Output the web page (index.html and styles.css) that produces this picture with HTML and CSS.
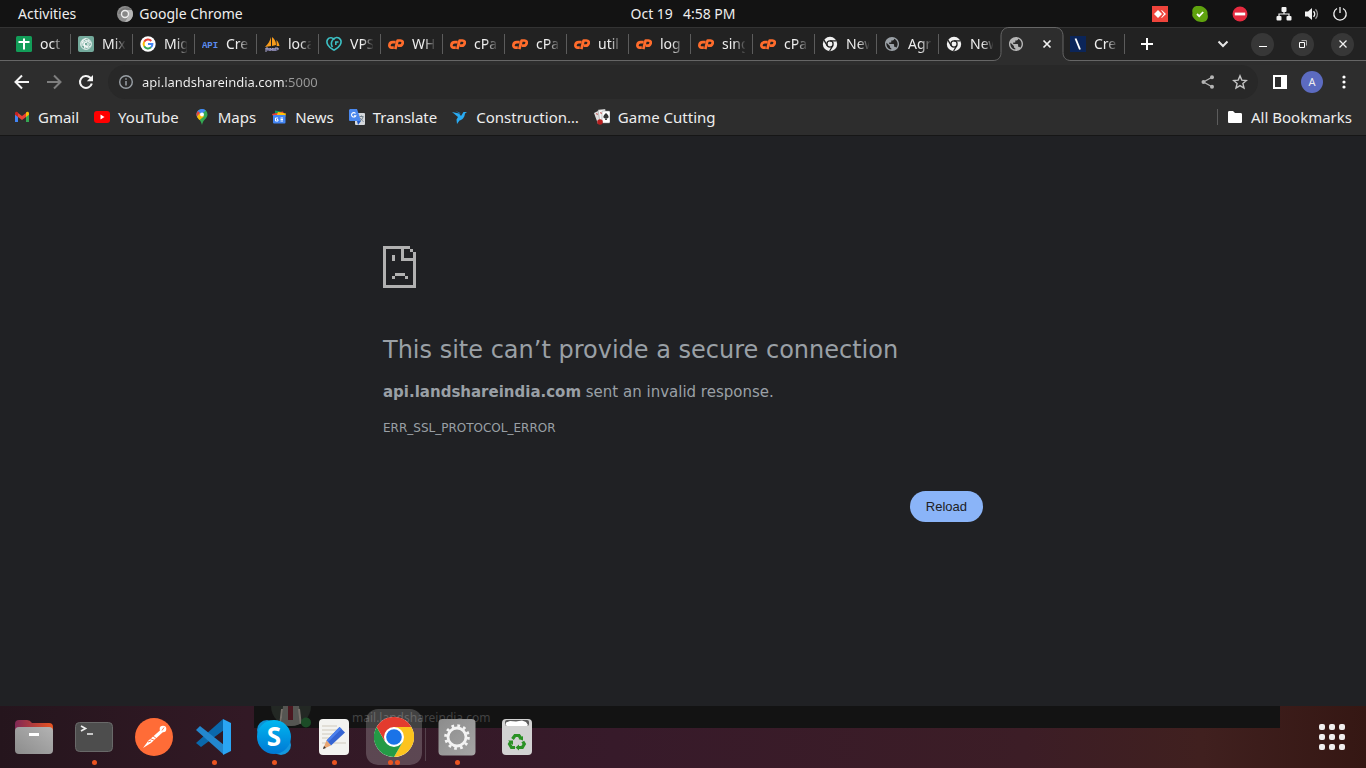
FILE: index.html
```html
<!DOCTYPE html>
<html lang="en">
<head>
<meta charset="utf-8">
<title>api.landshareindia.com</title>
<link rel="stylesheet" href="styles.css">
</head>
<body>
<svg class="defs" aria-hidden="true">
  <symbol id="cp" viewBox="0 0 16 16"><g fill="none" stroke="#ff6c2c" stroke-width="2.7" stroke-linejoin="round"><path d="M7.700 6.200H4.800C2.900 6.200 1.600 7.500 1.400 9.200S2.400 11.600 3.600 11.600H5.800"/><path d="M7.300 13.200 9.600 4.500h2.900c2 0 2.600 1.500 2.100 3S13 9.700 12 9.700H9.800"/></g></symbol>
  <symbol id="newtab" viewBox="0 0 16 16"><circle cx="8" cy="8" r="7.2" fill="#f1f1f1"/><circle cx="8" cy="8" r="3.1" fill="#f1f1f1" stroke="#222" stroke-width="1.3"/><path d="M8 4.800h6.400M5.200 9.600 2 4.200M10.800 9.600 7.600 15" stroke="#222" stroke-width="1.300"/></symbol>
  <symbol id="globe" viewBox="0.6 0.6 22.8 22.8"><path fill="currentColor" d="M12 2C6.480 2 2 6.480 2 12s4.480 10 10 10 10-4.480 10-10S17.520 2 12 2zm-1 17.930c-3.950-.49-7-3.850-7-7.930 0-.62.08-1.210.21-1.790L9 15v1c0 1.100.9 2 2 2v1.930zm6.900-2.540c-.26-.81-1-1.390-1.900-1.390h-1v-3c0-.55-.45-1-1-1H8v-2h2c.55 0 1-.45 1-1V7h2c1.100 0 2-.9 2-2v-.41c2.930 1.190 5 4.060 5 7.410 0 2.080-.8 3.970-2.100 5.390z"/></symbol>
  <symbol id="chrome" viewBox="0 0 48 48"><circle cx="24" cy="24" r="24" fill="#fff"/><path d="M24 12h20.800A24 24 0 0 1 24 48l10.400-18Z" fill="#fcc31e"/><path d="M3.200 12A24 24 0 0 0 24 48l10.400-18L24 34 13.600 30Z" fill="#249a46"/><path d="M24 12h20.800A24 24 0 0 0 3.200 12l10.400 18L15 20Z" fill="#e33b2e"/><circle cx="24" cy="24" r="12" fill="#fff"/><circle cx="24" cy="24" r="9.400" fill="#1a73e8"/></symbol>
</svg>

<header class="topbar">
  <div class="topbar-left">
    <button class="plain">Activities</button>
    <button class="plain app"><svg class="i16" viewBox="0 0 16 16"><circle cx="8" cy="8" r="8" fill="#8d8d8d"/><path d="M8 8H1.200A7.900 7.900 0 0 1 14.900 4H8Z" fill="#777"/><path d="M8 4h6.900A8 8 0 0 1 8 16l3.500-6z" fill="#b5b5b5"/><circle cx="8" cy="8" r="3.500" fill="#888" stroke="#eee" stroke-width="1.400"/></svg>Google Chrome</button>
  </div>
  <button class="plain clock"><span>Oct 19</span><span>4:58 PM</span></button>
  <div class="tray">
    <div class="tray-apps">
      <svg class="i16" viewBox="0 0 16 16"><path fill="#ef443b" d="M0 0h16v16H0z"/><path fill="#fff" d="m6 4 4 4-4 4-4-4zM9 4.200h1L14 8l-4 3.800H9L12 8z"/></svg>
      <svg class="i16" viewBox="0 0 16 16"><path fill="#5fa20e" d="M5 0C9 0 10 0 12 1.500S16 5 15.500 8C17 13 14 16 11 16c-5 0-7-1-9-3.500S0 9 .5 7C-.5 3 2 0 5 0z"/><path d="m5 8 2.200 2.200L11.200 6" fill="none" stroke="#fff" stroke-width="1.800"/></svg>
      <svg class="i16" viewBox="0 0 16 16"><circle cx="8" cy="8" r="7.500" fill="#e52a3f"/><path d="M2.800 6.600h10.400v2.800H2.800z" fill="#fff"/></svg>
    </div>
    <div class="tray-system">
      <svg class="i16" viewBox="0 0 16 16" fill="#f2f2f2"><rect x="5.500" y="1" width="5" height="5" rx="1"/><rect x=".5" y="10" width="5" height="4.500" rx="1"/><rect x="10.500" y="10" width="5" height="4.500" rx="1"/><path d="M3 11V8h10v3M8 5v3" fill="none" stroke="#f2f2f2" stroke-width="1.200"/></svg>
      <svg class="i16" viewBox="0 0 16 16"><path d="M1 5.500h3L8 2v12l-4-3.500H1z" fill="#f2f2f2"/><path d="M9.500 5.200a4 4 0 0 1 0 5.600" stroke="#f2f2f2" stroke-width="1.500" fill="none"/><path d="M11.500 3.200a7 7 0 0 1 0 9.600" stroke="#999" stroke-width="1.300" fill="none"/></svg>
      <svg class="i16" viewBox="0 0 16 16" fill="none" stroke="#f2f2f2" stroke-width="1.300"><path d="M8 1v6M5 2.500a6.200 6.200 0 1 0 6 0"/></svg>
    </div>
  </div>
</header>

<nav class="tabstrip" aria-label="Tabs">
  <button class="tab"><svg class="i16" viewBox="0 0 16 16"><rect width="16" height="16" rx="1.500" fill="#129d58"/><path d="M8 2.500v11M2.500 6h11" stroke="#fff" stroke-width="2"/></svg><span class="label">oct</span></button>
  <button class="tab"><svg class="i16" viewBox="0 0 16 16"><rect width="16" height="16" rx="2" fill="#74aa9c"/><g fill="none" stroke="#fff" stroke-width=".8"><circle cx="8" cy="8" r="5.400"/><path d="M5 3.500v5l5 3M8 2.600 4 5v5M11 4 6.500 6.600v5.500M13 7 8 4.300 3.500 7M13 9.500 9.500 11.800 5 9M11 4v5.500L6.500 12.500M8 6.200l1.800 1v2L8 10l-1.800-1V7.200z"/></g></svg><span class="label">Mix</span></button>
  <button class="tab"><svg class="i16" viewBox="0 0 16 16"><circle cx="8" cy="8" r="7.700" fill="#fff"/><g fill="none" stroke-width="2"><path d="M11.300 5A4.400 4.400 0 0 0 4.200 5.800" stroke="#ea4335"/><path d="M4.200 5.800a4.400 4.400 0 0 0 0 4.400" stroke="#fbbc05"/><path d="M4.200 10.200a4.400 4.400 0 0 0 6.800 1.100" stroke="#34a853"/><path d="M11 11.300A4.400 4.400 0 0 0 12.400 8H8" stroke="#4285f4"/></g></svg><span class="label">Mig</span></button>
  <button class="tab"><svg class="i16" viewBox="0 0 16 16"><text x="8" y="12" class="api">API</text></svg><span class="label">Cre</span></button>
  <button class="tab"><svg class="i16" viewBox="0 0 16 16"><path d="M7 1v9l-6 1C4 8 6 5 7 1zM8 1c3 2 4 5 4 8l-4 1zM12.500 4c2 2 2.500 4 3 6h-2.800z" fill="#f89c1c"/><path d="M1 12h14l-2 3H3z" fill="#5c5a7c"/><path d="M2 16v-4h2v2M6 15v-3l1.500 2L9 12v3M11 15v-3h3v2" stroke="#a9a6cc" fill="none"/></svg><span class="label">loca</span></button>
  <button class="tab"><svg class="i16" viewBox="0 0 16 16" fill="none" stroke="#3cc0c4" stroke-width="1.600"><path d="M8 14.200C2 11.500-.3 6.500 1.600 3.500s5.400-1.700 7 0"/><path d="M8 14.200c6-2.700 8.300-7.700 6.400-10.700S8.500.9 6.500 4.200 5 9 6.500 11"/><path d="M12.500 6H9.800v3"/></svg><span class="label">VPS</span></button>
  <button class="tab"><svg class="i16"><use href="#cp"/></svg><span class="label">WH</span></button>
  <button class="tab"><svg class="i16"><use href="#cp"/></svg><span class="label">cPa</span></button>
  <button class="tab"><svg class="i16"><use href="#cp"/></svg><span class="label">cPa</span></button>
  <button class="tab"><svg class="i16"><use href="#cp"/></svg><span class="label">util</span></button>
  <button class="tab"><svg class="i16"><use href="#cp"/></svg><span class="label">log</span></button>
  <button class="tab"><svg class="i16"><use href="#cp"/></svg><span class="label">sing</span></button>
  <button class="tab"><svg class="i16"><use href="#cp"/></svg><span class="label">cPa</span></button>
  <button class="tab"><svg class="i16"><use href="#newtab"/></svg><span class="label">New</span></button>
  <button class="tab"><svg class="i16 cool"><use href="#globe"/></svg><span class="label">Agr</span></button>
  <button class="tab last"><svg class="i16"><use href="#newtab"/></svg><span class="label">New</span></button>
  <div class="tab active">
    <svg class="tab-shape" viewBox="0 0 78 34"><path d="M0 34v-.5c5 0 8-3 8-8V9c0-5 3-8.500 8-8.500h46c5 0 8 3.500 8 8.500v16.500c0 5 3 8 8 8v.5z" fill="#2d2d2d"/><path d="M0 33.500c5 0 8-3 8-8V9c0-5 3-8.500 8-8.500h46c5 0 8 3.500 8 8.500v16.500c0 5 3 8 8 8" fill="none" stroke="#666"/></svg>
    <svg class="i16 warm"><use href="#globe"/></svg>
    <button class="icon-btn close" aria-label="Close tab"><svg class="i16" viewBox="0 0 16 16"><path d="m4.500 4.500 7 7m0-7-7 7" stroke="#f1f1f1" stroke-width="1.700"/></svg></button>
  </div>
  <button class="tab"><svg class="i16" viewBox="0 0 16 16"><path d="M0 0h16v16H0z" fill="#0b2559"/><path d="m5.500 2.500 4.500 11" stroke="#fff" stroke-width="1.900"/></svg><span class="label">Cre</span></button>
  <button class="icon-btn plus" aria-label="New tab"><svg class="i16" viewBox="0 0 16 16"><path d="M8 2v12M2 8h12" stroke="#fff" stroke-width="2"/></svg></button>
  <div class="window-controls">
    <button class="icon-btn" aria-label="Search tabs"><svg class="i16" viewBox="0 0 16 16"><path d="m3.500 5.500 4.500 4.500 4.500-4.500" fill="none" stroke="#e6e6e6" stroke-width="2"/></svg></button>
    <button class="round" aria-label="Minimize"><svg class="i16" viewBox="0 0 16 16"><path d="M4 10.500h8" stroke="#fff"/></svg></button>
    <button class="round" aria-label="Restore"><svg class="i16" viewBox="0 0 16 16" fill="none"><path d="M6.500 4.500h5v5" stroke="#aaa"/><path d="M4.500 6.500h5v5h-5z" stroke="#fff"/></svg></button>
    <button class="round" aria-label="Close"><svg class="i16" viewBox="0 0 16 16"><path d="m4.500 4.500 7 7m0-7-7 7" stroke="#f1f1f1" stroke-width="1.300"/></svg></button>
  </div>
</nav>

<div class="toolbar">
  <button class="tool" aria-label="Back"><svg class="i16" viewBox="0 0 16 16" fill="none" stroke="#f4f4f4" stroke-width="2"><path d="M15 8H2M8 1.500 1.500 8 8 14.500"/></svg></button>
  <button class="tool" aria-label="Forward"><svg class="i16" viewBox="0 0 16 16" fill="none" stroke="#7e7e7e" stroke-width="2"><path d="M1 8h13M8 1.500 14.500 8 8 14.500"/></svg></button>
  <button class="tool" aria-label="Reload page"><svg class="i16" viewBox="0 0 16 16"><path d="M13.800 9.500A6 6 0 1 1 12.300 3.800l1 1" fill="none" stroke="#f4f4f4" stroke-width="2.100"/><path d="M15 1v6.200H8.800z" fill="#f4f4f4"/></svg></button>
  <form class="omnibox">
    <svg class="i16" viewBox="0 0 16 16"><circle cx="8" cy="8" r="6.300" fill="none" stroke="#9aa0a6" stroke-width="1.400"/><path d="M8 7v4.500M8 4.300v1.500" stroke="#9aa0a6" stroke-width="1.500"/></svg>
    <input class="url" type="text" aria-label="Address" value="api.landshareindia.com:5000">
    <button type="button" class="tool" aria-label="Share"><svg class="i16" viewBox="0 0 16 16" fill="#b5b5b5"><circle cx="3.500" cy="8" r="2"/><circle cx="12" cy="3.300" r="2"/><circle cx="12" cy="12.700" r="2"/><path d="M12 3.300 3.500 8l8.500 4.700" fill="none" stroke="#b5b5b5" stroke-width="1.300"/></svg></button>
    <button type="button" class="tool" aria-label="Bookmark"><svg class="i16" viewBox="0 0 16 16"><path d="m8 1.900 1.800 4.200 4.600.4-3.500 3 1.100 4.500L8 11.600 4 14l1.100-4.500-3.500-3 4.600-.4z" fill="none" stroke="#c4c4c4" stroke-width="1.400"/></svg></button>
  </form>
  <button class="tool" aria-label="Side panel"><svg class="i16" viewBox="0 0 16 16"><path d="M1 1h14v14H1zM3 3v10h6V3z" fill="#fff" fill-rule="evenodd"/></svg></button>
  <button class="tool" aria-label="Profile"><span class="avatar">A</span></button>
  <button class="tool" aria-label="Menu"><svg class="i16" viewBox="0 0 16 16" fill="#fff"><circle cx="8" cy="3" r="1.600"/><circle cx="8" cy="8" r="1.600"/><circle cx="8" cy="13" r="1.600"/></svg></button>
</div>

<nav class="bookmarks" aria-label="Bookmarks">
  <a href="#gmail"><svg class="i16" viewBox="0 0 16 16"><path d="M1 4v9h3V6z" fill="#4285f4"/><path d="M15 4v9h-3V6z" fill="#34a853"/><path d="m4 4 4 3 4-3v4l-4 3-4-3z" fill="#ea4335"/><path d="M1 4.500C1 2.500 3 2.300 4 3.500V8L1 5.800z" fill="#c5221f"/><path d="M15 4.500c0-2-2-2.200-3-1V8l3-2.200z" fill="#fbbc04"/></svg>Gmail</a>
  <a href="#youtube"><svg class="i16" viewBox="0 0 16 16"><rect y="2" width="16" height="12" rx="3" fill="#f00"/><path d="m6.500 5.500 4 2.500-4 2.500z" fill="#fff"/></svg>YouTube</a>
  <a href="#maps"><svg class="i16" viewBox="0 0 16 16"><path d="M8 0a5.500 5.500 0 0 0-5.500 5.500c0 4 4.500 5 5.500 10.500 1-5.500 5.500-6.500 5.500-10.500A5.500 5.500 0 0 0 8 0z" fill="#34a853"/><path d="M3.500 8.500 11.800 1.500A5.500 5.500 0 0 0 2.500 5.500c0 1.200.4 2.100 1 3z" fill="#4285f4"/><path d="M3.800 2 6 4 2.900 7.500A5.500 5.500 0 0 1 3.800 2z" fill="#ea4335"/><path d="m3 7.500 3-3.500 4 3.500L5.500 11c-1-1-2.200-2.200-2.500-3.500z" fill="#fbbc04"/><circle cx="8" cy="5.500" r="2" fill="#fff"/></svg>Maps</a>
  <a href="#news"><svg class="i16" viewBox="0 0 16 16"><path d="M4 1.500 12 3v4H4z" fill="#0f9d58"/><path d="m1 5 11-2.500L14 7H2z" fill="#ea4335"/><path d="m7 3 8 1.500-1 4H5z" fill="#ffc107"/><rect x="2" y="6" width="12.500" height="8.500" rx="1" fill="#4285f4"/><path d="M7 9H4.500v3H7v-1.500H6M9.500 9H12M9.500 10.500H12M9.500 12H12" stroke="#fff" fill="none"/></svg>News</a>
  <a href="#translate"><svg class="i16" viewBox="0 0 16 16"><rect x="6" y="4" width="10" height="12" rx="1" fill="#d5d8dc"/><path d="M1 0h7l4 12H1a1 1 0 0 1-1-1V1z" fill="#4a88ee"/><path d="M8 12h4l-3 4z" fill="#2158c4"/><path d="M6.500 4.500a2.200 2.200 0 1 0 .3 2.200H5" fill="none" stroke="#fff" stroke-width="1.100"/><path d="M10.500 7.500h4M12.500 6.500v1M14 8c-.5 2-1.500 3-3 4M11.500 9c.5 1.500 1.500 2.500 3 3.500" stroke="#71808b" fill="none"/></svg>Translate</a>
  <a href="#construction"><svg class="i16" viewBox="0 0 16 16" fill="#29abf2"><path d="m0 3 7 1.500L9 7l2.500-4H15l-2 1.500C12.500 9 10 11 7.500 11.500L5 15l-.5-4.500L6 8z"/><path d="m3.500 2 4 1.500 1.500 2z" fill="#187fc6"/></svg>Construction…</a>
  <a href="#cards"><svg class="i16" viewBox="0 0 16 16"><path d="m0 4 6-3 4 11-6 3z" fill="#ddd"/><path d="m4 1 7-1 2 12-7 1z" fill="#f3f3f3" stroke="#888" stroke-width=".5"/><rect x="8" y="2" width="8" height="12" rx="1" fill="#fff" stroke="#888" stroke-width=".5"/><path d="M12 4c2 2 3 3 2.500 4.500-.5 1-1.500 1-2 .5l.5 2h-2l.5-2c-.5.500-1.500.5-2-.5C9 7 10 6 12 4z" fill="#333"/><circle cx="6" cy="13" r="2.800" fill="#b62020"/><path d="m2 5 1-1 1 2zM6 4l1-1 1 2z" fill="#b62020"/></svg>Game Cutting</a>
  <a href="#all" class="all"><svg class="i16" viewBox="0 0 16 16"><path d="M1 3.500C1 2.500 1.500 2 2.500 2H6l2 2h5.500c1 0 1.500.5 1.500 1.500v7c0 1-.5 1.500-1.500 1.500h-11c-1 0-1.500-.5-1.500-1.500z" fill="#fff"/></svg>All Bookmarks</a>
</nav>

<main class="page">
  <section class="error">
    <svg class="sad" viewBox="0 0 33 42" fill="#b1b1b1" shape-rendering="crispEdges"><path d="M0 0h27v3H0zM0 0h3v42H0zM0 39h33v3H0zM30 6h3v36h-3zM27 3h3v3h-3zM18 3h3v12h-3zM18 12h15v3H18zM9 9h3v6H9zM12 27h10v3H12zM9 30h3v3H9zM22 30h3v3h-3z"/></svg>
    <h1>This site can’t provide a secure connection</h1>
    <p class="summary"><strong>api.landshareindia.com</strong> sent an invalid response.</p>
    <p class="code">ERR_SSL_PROTOCOL_ERROR</p>
    <button class="reload">Reload</button>
  </section>
</main>

<footer class="dock">
  <div class="behind">
    <svg class="person" viewBox="0 0 40 22"><defs><clipPath id="round"><circle cx="20" cy="0" r="20"/></clipPath></defs><g clip-path="url(#round)"><path fill="#232824" d="M0 0h40v22H0z"/><path d="M12 0h16l3 22H10z" fill="#555552"/><path d="M17 0h5v14h-5z" fill="#4a1820"/><path d="m11 3-2 17M28 3l2 17" stroke="#76706a" stroke-width="2"/></g><circle cx="35" cy="16.500" r="5" fill="#1c4c27"/></svg>
    <span>mail.landshareindia.com</span>
  </div>
  <button class="launcher" aria-label="Files"><svg viewBox="0 0 38 38"><defs><linearGradient id="fo"><stop stop-color="#802856"/><stop offset="1" stop-color="#e95420"/></linearGradient><linearGradient id="fg" x1="0" y1="1" x2="1" y2="0"><stop stop-color="#8c8c8c"/><stop offset="1" stop-color="#b3b3b3"/></linearGradient></defs><path d="M0 6q0-4 4-4h8q3 0 5 3h17q4 0 4 4v13H0z" fill="url(#fo)"/><rect y="9" width="38" height="27" rx="4" fill="url(#fg)"/><path d="M14 16.500h10" stroke="#fff" stroke-width="3"/></svg></button>
  <button class="launcher run" aria-label="Terminal"><svg viewBox="0 0 38 38"><rect x=".5" y="4.500" width="37" height="29" rx="4" fill="#4d4d4d" stroke="#696969"/><path d="m6 8 4.500 2.500L6 13M12 16h6" fill="none" stroke="#eee" stroke-width="1.700"/></svg></button>
  <button class="launcher" aria-label="Postman"><svg viewBox="0 0 38 38"><circle cx="19" cy="19" r="19" fill="#ff6c37"/><path d="m25.500 12-12 10.500L8 30l8-5 12-11z" fill="#fff"/><circle cx="28" cy="11" r="3.300" fill="#fff"/><path d="m15 20.500 5 2M18 18l4 3M27 12.500l2-3M13 24l3-1" stroke="#ff6c37" stroke-width=".9"/></svg></button>
  <button class="launcher run" aria-label="Visual Studio Code"><svg viewBox="0 0 38 38"><path d="M28 1 1 25l5 4L29 12z" fill="#0a68ac"/><path d="m1 12 4-4 24 19-1 9z" fill="#2387ce"/><path d="m28 1 8 4v28l-8 4z" fill="#2aa5f4"/></svg></button>
  <button class="launcher run" aria-label="Skype"><svg viewBox="0 0 38 38"><defs><linearGradient id="sk" x2="0" y2="1"><stop stop-color="#00b7f0"/><stop offset="1" stop-color="#0078d4"/></linearGradient></defs><circle cx="12" cy="12" r="10" fill="#0e91d4"/><circle cx="26" cy="27" r="10" fill="#1497dd"/><circle cx="19" cy="19" r="17" fill="url(#sk)"/><text x="19" y="28" class="skype">S</text></svg></button>
  <button class="launcher run" aria-label="Text Editor"><svg viewBox="0 0 38 38"><rect x="4" y="1" width="30" height="36" rx="4" fill="#f3f3f0"/><path d="M7 8h15M7 12h15M7 16h14M7 20h11M7 25h24" stroke="#cfcabb" stroke-width="1.200"/><path d="m24.500 9 5.500 5.500-14 13-4.500-5z" fill="#3564d2"/><path d="m24.500 9 2 1.800-13 13-2-1.300z" fill="#4b7fec"/><path d="m11.500 22.500 4.500 5L8 31z" fill="#e8a672"/><path d="m9 28 2 2-3 1z" fill="#333"/></svg></button>
  <button class="launcher run two current" aria-label="Google Chrome"><svg class="big"><use href="#chrome"/></svg></button>
  <span class="separator"></span>
  <button class="launcher run" aria-label="Settings"><svg viewBox="0 0 38 38"><defs><linearGradient id="st" x2="1" y2="1"><stop stop-color="#8c8c8c"/><stop offset="1" stop-color="#a5a5a5"/></linearGradient></defs><rect x=".5" y="1" width="37" height="36.500" rx="4" fill="url(#st)"/><circle cx="19" cy="19" r="9" fill="none" stroke="#f3f3f3" stroke-width="2.800"/><circle cx="19" cy="19" r="11.300" fill="none" stroke="#f3f3f3" stroke-width="3" stroke-dasharray="2.700 3.217"/></svg></button>
  <button class="launcher" aria-label="Trash"><svg viewBox="0 0 38 38"><rect x="4" y="1" width="30" height="36" rx="4" fill="#d2d2d2"/><rect x="7" y="2" width="24" height="6" rx="2" fill="#5c5c5c"/><path d="M8 4.500 12 3l6 .5 6-1 4 1.500 2 3-1 1H9L7.500 7z" fill="#fff"/><g fill="none" stroke="#2a9124" stroke-width="3.200"><path d="m14.500 21 2.500-3.500h4l2 3"/><path d="m24.800 23.500 1.500 2.500-2 3.500H20"/><path d="M17 29.500h-3.500l-2-3.500 1.500-2.500"/></g><path d="m20.500 21 4.500-3V22.500zM21 26.500v6L17.500 29.500zM10 22.500h5V27z" fill="#2a9124"/></svg></button>
  <button class="launcher apps" aria-label="Show applications"><svg viewBox="0 0 38 38" fill="#f0eeee"><rect x="6" y="6" width="6" height="6" rx="2"/><rect x="16" y="6" width="6" height="6" rx="2"/><rect x="26" y="6" width="6" height="6" rx="2"/><rect x="6" y="16" width="6" height="6" rx="2"/><rect x="16" y="16" width="6" height="6" rx="2"/><rect x="26" y="16" width="6" height="6" rx="2"/><rect x="6" y="26" width="6" height="6" rx="2"/><rect x="16" y="26" width="6" height="6" rx="2"/><rect x="26" y="26" width="6" height="6" rx="2"/></svg></button>
</footer>
</body>
</html>
```
FILE: styles.css
```css
* { box-sizing: border-box; }
html, body { height: 100%; }
body {
  margin: 0;
  display: flex;
  flex-direction: column;
  min-height: 100vh;
  overflow: hidden;
  background: #202124;
  color: #eee;
  font: 14px/20px "Noto Sans", "Open Sans", sans-serif;
}
button {
  margin: 0;
  padding: 0;
  border: 0;
  background: none;
  color: inherit;
  font: inherit;
}
svg { display: block; flex: none; }
.defs { position: absolute; width: 0; height: 0; }
.i16 { width: 16px; height: 16px; }

/* Desktop top bar */
.topbar {
  display: grid;
  grid-template-columns: 1fr auto 1fr;
  align-items: center;
  height: 27px;
  flex: none;
  padding: 0 18px;
  background: #131313;
}
.topbar-left { display: flex; gap: 41px; }
.plain { display: flex; align-items: center; }
.app { gap: 6px; }
.clock { gap: 10px; }
.tray, .tray-apps, .tray-system { display: flex; align-items: center; }
.tray { justify-content: flex-end; gap: 28px; }
.tray-apps { gap: 24px; }
.tray-system { gap: 12px; }

/* Tab strip */
.tabstrip {
  display: flex;
  align-items: center;
  flex: none;
  height: 34px;
  padding: 0 12px 0 9px;
  background: #222;
  border-top: 1px solid #333;
  border-bottom: 1px solid #666;
}
.tab {
  display: flex;
  align-items: center;
  gap: 8px;
  flex: 0 1 62px;
  min-width: 0;
  height: 20px;
  padding-left: 7px;
  border-right: 1px solid #5c5c5c;
}
.last { border-color: transparent; }
.label {
  width: 23px;
  overflow: hidden;
  white-space: nowrap;
  text-align: left;
  -webkit-mask-image: linear-gradient(90deg, #000 12px, transparent 24px);
  mask-image: linear-gradient(90deg, #000 12px, transparent 24px);
}
.cool { color: #9aa0a6; }
.warm { color: #b5b5b5; position: relative; }
.active { position: relative; border: 0; gap: 15px; }
.tab-shape { position: absolute; left: -8px; bottom: -7px; width: 78px; height: 34px; }
.icon-btn { display: flex; flex: none; }
.close { position: relative; }
.plus { margin-left: 14px; }
.api { font: bold 9px "Liberation Mono", monospace; fill: #5b8def; text-anchor: middle; }
.window-controls { display: flex; align-items: center; gap: 17px; margin-left: auto; }
.round {
  display: grid;
  place-items: center;
  width: 23px;
  height: 23px;
  border-radius: 50%;
  background: #373737;
}
.window-controls .icon-btn { margin-right: 3px; }

/* Toolbar */
.toolbar {
  display: flex;
  align-items: center;
  flex: none;
  height: 38px;
  padding: 4px 6px 0;
  background: #2d2d2d;
}
.tool { display: grid; place-items: center; flex: none; width: 32px; height: 32px; }
.omnibox {
  display: flex;
  align-items: center;
  flex: 1;
  height: 34px;
  margin: 0 6px;
  padding: 0 2px 0 10px;
  border-radius: 17px;
  background: #282828;
}
.url {
  flex: 1;
  min-width: 0;
  padding: 0;
  margin-left: 8px;
  border: 0;
  outline: 0;
  font: inherit;
  font-size: 13px;
  color: transparent;
  background: linear-gradient(90deg, #f4f4f4 143px, #9a9a9a 143px);
  -webkit-background-clip: text;
  background-clip: text;
}
.avatar {
  width: 22px;
  height: 22px;
  border-radius: 50%;
  background: #5c6bc0;
  font-size: 11px;
  line-height: 22px;
}

/* Bookmarks bar */
.bookmarks {
  display: flex;
  align-items: center;
  gap: 15px;
  flex: none;
  height: 37px;
  padding: 0 14px;
  background: #2d2d2d;
  border-bottom: 1px solid #161616;
  font-size: 15px;
}
.bookmarks a {
  display: flex;
  align-items: center;
  gap: 8px;
  color: #eee;
  text-decoration: none;
  white-space: nowrap;
}
.bookmarks .all { margin-left: auto; height: 16px; padding-left: 9px; border-left: 1px solid #5c5c5c; }

/* Error page */
.page { flex: 1; min-height: 0; padding: 110px 24px 0; }
.error {
  display: flex;
  flex-direction: column;
  max-width: 600px;
  margin: 0 auto;
  color: #9aa0a6;
  font-family: "DejaVu Sans", sans-serif;
}
.sad { width: 33px; height: 42px; }
h1 { margin: 47px 0 15px; font-size: 24px; font-weight: 500; line-height: 30px; }
.summary { margin: 0; font-size: 15px; line-height: 24px; }
.code { margin: 12px 0 0; font-size: 12px; line-height: 24px; }
.reload {
  align-self: flex-end;
  margin-top: 51px;
  padding: 8px 16px;
  border-radius: 16px;
  background: #8ab4f8;
  color: #202124;
  font: 13px/15px "Liberation Sans", Arial, sans-serif;
}

/* Dock */
.dock {
  position: relative;
  display: flex;
  align-items: center;
  gap: 4px;
  flex: none;
  height: 62px;
  padding: 0 6px;
  background: linear-gradient(90deg, #25151d, #321925 18%, #371a2a 45%, #3c1d26 75%, #40201f 88%, #351713);
}
.behind {
  position: absolute;
  left: 254px;
  right: 86px;
  top: 0;
  display: flex;
  gap: 41px;
  height: 22px;
  padding-left: 17px;
  overflow: hidden;
  background: #131313;
  color: #424242;
  font-size: 12px;
  line-height: 24px;
}
.person { width: 40px; height: 22px; }
.launcher {
  position: relative;
  display: grid;
  place-items: center;
  width: 56px;
  height: 56px;
  border-radius: 12px;
}
.launcher svg { width: 38px; height: 38px; }
.launcher .big { width: 40px; height: 40px; }
.skype { font: bold 26px "Open Sans", sans-serif; fill: #fff; text-anchor: middle; }
.current { background: rgba(255, 255, 255, 0.2); }
.run::after {
  content: "";
  position: absolute;
  left: 50%;
  bottom: 0;
  width: 5px;
  height: 5px;
  margin-left: -2px;
  border-radius: 50%;
  background: #e95420;
}
.two::after { margin-left: -6px; box-shadow: 7px 0 #e95420; }
.separator { width: 1px; height: 48px; margin: 0 -1px; background: #54414b; }
.apps { margin-left: auto; }
```
